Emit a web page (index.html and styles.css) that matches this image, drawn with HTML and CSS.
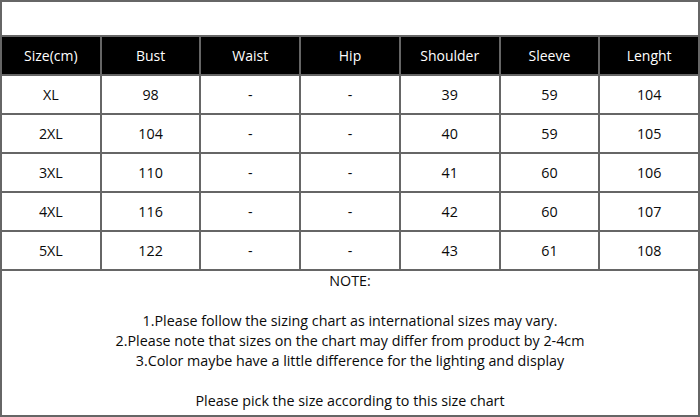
FILE: index.html
```html
<!DOCTYPE html>
<html>
<head>
<meta charset="utf-8">
<link rel="stylesheet" href="styles.css">
</head>
<body>
<div class="sheet">
  <div class="top"></div>
  <div class="chart">
    <div class="cell head">Size(cm)</div>
    <div class="cell head">Bust</div>
    <div class="cell head">Waist</div>
    <div class="cell head">Hip</div>
    <div class="cell head">Shoulder</div>
    <div class="cell head">Sleeve</div>
    <div class="cell head">Lenght</div>

    <div class="cell">XL</div><div class="cell">98</div><div class="cell">-</div><div class="cell">-</div><div class="cell">39</div><div class="cell">59</div><div class="cell">104</div>
    <div class="cell">2XL</div><div class="cell">104</div><div class="cell">-</div><div class="cell">-</div><div class="cell">40</div><div class="cell">59</div><div class="cell">105</div>
    <div class="cell">3XL</div><div class="cell">110</div><div class="cell">-</div><div class="cell">-</div><div class="cell">41</div><div class="cell">60</div><div class="cell">106</div>
    <div class="cell">4XL</div><div class="cell">116</div><div class="cell">-</div><div class="cell">-</div><div class="cell">42</div><div class="cell">60</div><div class="cell">107</div>
    <div class="cell">5XL</div><div class="cell">122</div><div class="cell">-</div><div class="cell">-</div><div class="cell">43</div><div class="cell">61</div><div class="cell">108</div>
  </div>
  <div class="notes">
    <p>NOTE:</p>
    <p>&nbsp;</p>
    <p>1.Please follow the sizing chart as international sizes may vary.</p>
    <p>2.Please note that sizes on the chart may differ from product by 2-4cm</p>
    <p>3.Color maybe have a little difference for the lighting and display</p>
    <p>&nbsp;</p>
    <p>Please pick the size according to this size chart</p>
  </div>
</div>
</body>
</html>
```
FILE: styles.css
```css
html, body {
  margin: 0;
  padding: 0;
  background: #ffffff;
}
body {
  font-family: "Open Sans", "Noto Sans", sans-serif;
  color: #0a0a0a;
}
.sheet {
  width: 700px;
  height: 417px;
  box-sizing: border-box;
  border: 2px solid #666666;
  display: flex;
  flex-direction: column;
}
.top {
  height: 33px;
}
.chart {
  display: grid;
  grid-template-columns: repeat(7, 1fr);
  grid-auto-rows: 37px;
  gap: 2px;
  background: #666666;
  border-top: 2px solid #666666;
  border-bottom: 2px solid #666666;
}
.cell {
  background: #ffffff;
  display: flex;
  align-items: center;
  justify-content: center;
  font-size: 14.3px;
}
.cell.head {
  background: #000000;
  color: #ffffff;
  font-size: 14px;
}
.notes {
  text-align: center;
  font-size: 14.3px;
  line-height: 20px;
}
.notes p {
  margin: 0;
}
```
